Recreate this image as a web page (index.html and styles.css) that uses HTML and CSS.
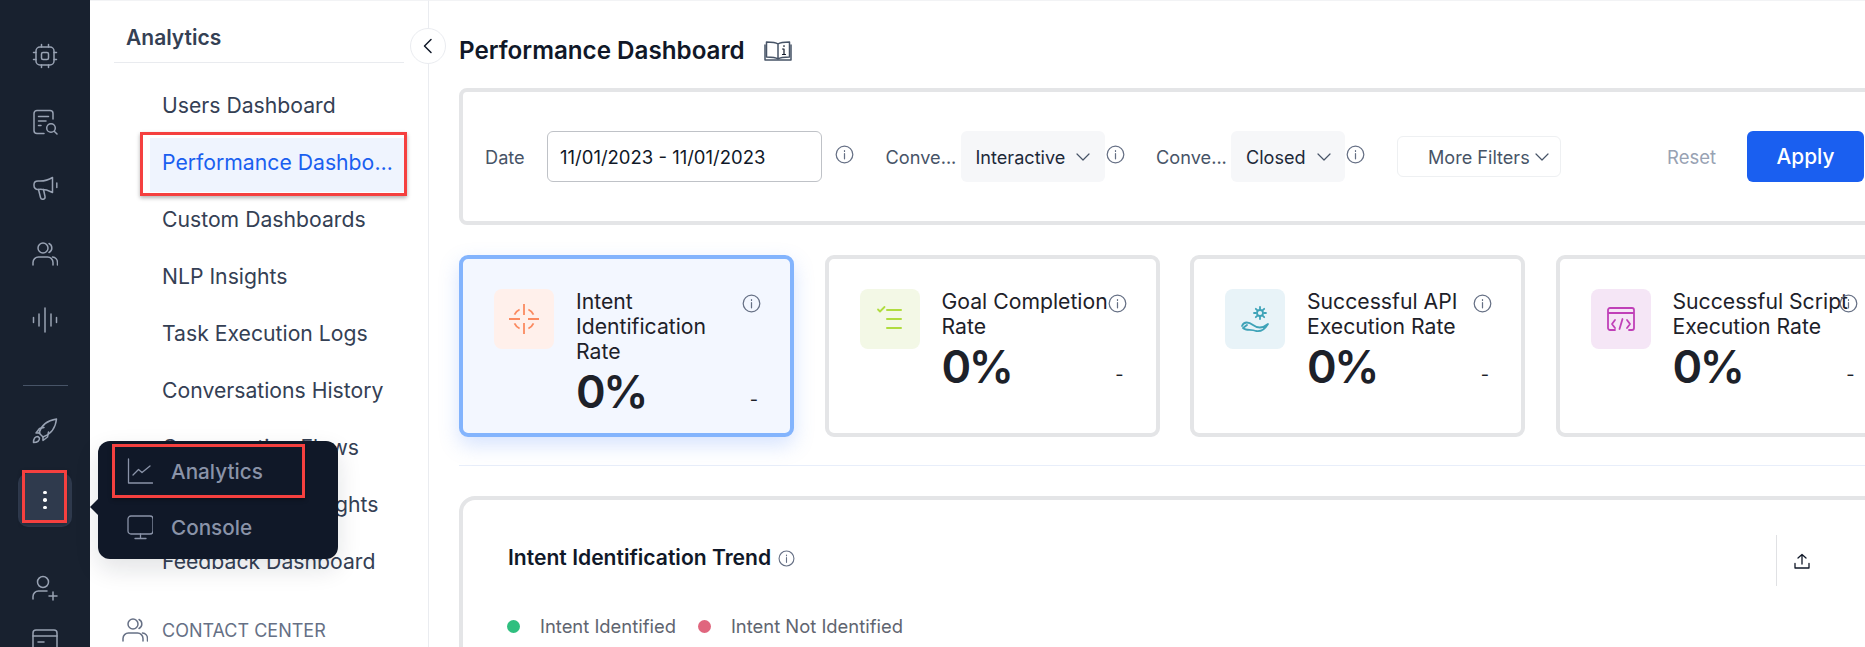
FILE: index.html
```html
<!DOCTYPE html>
<html lang="en">
<head>
<meta charset="utf-8">
<title>Performance Dashboard</title>
<link rel="stylesheet" href="styles.css">
</head>
<body>
<div class="app">
  <nav class="rail">
    <div class="rail-cell"><svg class="ri" viewBox="0 0 26 26"><rect x="4" y="4" width="18" height="18" rx="4"/><rect x="9.5" y="9.5" width="7" height="7" rx="1.5"/><path d="M9.5 4V1.5M16.500 4V1.500M9.500 24.500V22M16.500 24.500V22M4 9.500H1.500M4 16.500H1.500M24.500 9.500H22M24.500 16.500H22"/></svg></div>
    <div class="rail-cell"><svg class="ri" viewBox="0 0 26 26"><path d="M21 10V4.500A3 3 0 0 0 18 1.500H5A3 3 0 0 0 2 4.500V21.500A3 3 0 0 0 5 24.500H12"/><path d="M6.500 7.500H16.500M6.500 12H14M6.500 16.500H9"/><circle cx="19" cy="19" r="4.300"/><path d="M22.200 22.200L25 25"/></svg></div>
    <div class="rail-cell"><svg class="ri" viewBox="0 0 26 26"><path d="M20.500 2.500V17.500C15 14.500 11 14 6 14.500A3.800 3.800 0 0 1 2 10.500V9.500C2 7.500 3.500 6 6 6H8C12 6 16.500 5 20.500 2.500Z"/><path d="M6.500 14.500L8.500 22.500A2.300 2.300 0 0 0 13 21.500L11.500 14.500"/><path d="M24.800 8V12.500"/></svg></div>
    <div class="rail-cell"><svg class="ri" viewBox="0 0 26 26"><circle cx="11" cy="7" r="5"/><path d="M1 24V21.500A5.500 5.500 0 0 1 6.500 16H15.500A5.500 5.500 0 0 1 21 21.500V24"/><path d="M17 2.500A5 5 0 0 1 17 11.500M20.500 16A5.500 5.500 0 0 1 25.500 21.500V24"/></svg></div>
    <div class="rail-cell"><svg class="ri" viewBox="0 0 26 26"><path d="M1.500 10.500V15.500M7 7V19M13 1V25M19 7V19M24.500 10.500V15.500"/></svg></div>
    <div class="rail-line"></div>
    <div class="rail-cell rocket"><svg class="ri" viewBox="0 0 26 26"><path d="M9 17L7 15C9 8 15 2.500 24.500 1C23.500 10.500 18 16.500 11 19Z"/><path d="M8 15H4L7.500 10.500 12 9.500M11 18.500V22.500L15.500 19 16.500 14"/><path d="M6 18.500C3.500 18.500 1.500 20.500 1.500 24.500 5.500 24.500 7.500 22.500 7.500 20Z"/></svg></div>
    <div class="dots-btn"><i></i><i></i><i></i><span class="mark dots-mark"></span></div>
    <div class="rail-cell low first"><svg class="ri" viewBox="0 0 26 26"><circle cx="11" cy="7" r="5.500"/><path d="M1 24V21.500A5.500 5.500 0 0 1 6.500 16H15"/><path d="M21 17V25M17 21H25"/></svg></div>
    <div class="rail-cell low"><svg class="ri" viewBox="0 0 26 26"><rect x="1" y="1" width="24" height="24" rx="3"/><path d="M1 7H25M6 13H12"/></svg></div>
  </nav>

  <aside class="side">
    <div class="side-head">Analytics</div>
    <ul class="side-list">
      <li class="side-item">Users Dashboard</li>
      <li class="side-item active"><span class="side-text">Performance Dashboard</span><span class="mark item-mark"></span></li>
      <li class="side-item">Custom Dashboards</li>
      <li class="side-item">NLP Insights</li>
      <li class="side-item">Task Execution Logs</li>
      <li class="side-item">Conversations History</li>
      <li class="side-item">Conversation Flows</li>
      <li class="side-item">Conversation Insights</li>
      <li class="side-item">Feedback Dashboard</li>
    </ul>
    <div class="side-group">
      <svg class="gi" viewBox="0 0 26 26"><circle cx="11" cy="7" r="5"/><path d="M1 24V21.500A5.500 5.500 0 0 1 6.500 16H15.500A5.500 5.500 0 0 1 21 21.500V24"/><path d="M17 2.500A5 5 0 0 1 17 11.500M20.500 16A5.500 5.500 0 0 1 25.500 21.500V24"/></svg>
      <span>CONTACT CENTER</span>
    </div>
    <button class="collapse" type="button" aria-label="Collapse"><svg viewBox="0 0 12 16"><path d="M9 1.500L2.500 8L9 14.500"/></svg></button>
  </aside>

  <div class="popup">
    <div class="pop-row">
      <svg class="pi" viewBox="0 0 26 26"><path d="M1.500 1V25H25.500"/><path d="M6 17L11.500 11.500 15 14.500 23 8"/></svg>
      <span>Analytics</span><span class="mark pop-mark"></span>
    </div>
    <div class="pop-row">
      <svg class="pi" viewBox="0 0 26 26"><rect x="1" y="2" width="25" height="18" rx="3"/><path d="M13.500 20V24.500M8 24.500H19"/></svg>
      <span>Console</span>
    </div>
  </div>

  <main class="main">
    <div class="title-row">
      <h1 class="title">Performance Dashboard</h1>
      <svg class="book" viewBox="0 0 28 20"><path d="M14 3C12 1.500 9 1 2.500 1V16C9 16 12 16.500 14 18C16 16.500 19 16 25.500 16V1C19 1 16 1.500 14 3ZM14 3V18"/><path d="M1 4V19H27V4"/><path class="book-i" d="M20 4.500V5.500M18.500 8H20V13.500M18.500 13.500H21.500"/></svg>
    </div>

    <section class="filters">
      <span class="f-label date-label">Date</span>
      <div class="f-date">11/01/2023 - 11/01/2023</div>
      <svg class="info f-info" viewBox="0 0 20 20"><circle cx="10" cy="10" r="8.750"/><path d="M10 9V14.500M10 5.800V6.800"/></svg>
      <span class="f-label conv conv-a">Conve...</span>
      <div class="f-select sel-a">Interactive<svg class="chev" viewBox="0 0 14 8"><path d="M1 1L7 7L13 1"/></svg></div>
      <svg class="info s-info" viewBox="0 0 20 20"><circle cx="10" cy="10" r="8.750"/><path d="M10 9V14.500M10 5.800V6.800"/></svg>
      <span class="f-label conv conv-b">Conve...</span>
      <div class="f-select sel-b">Closed<svg class="chev" viewBox="0 0 14 8"><path d="M1 1L7 7L13 1"/></svg></div>
      <svg class="info s-info" viewBox="0 0 20 20"><circle cx="10" cy="10" r="8.750"/><path d="M10 9V14.500M10 5.800V6.800"/></svg>
      <div class="more">More Filters<svg class="chev" viewBox="0 0 14 8"><path d="M1 1L7 7L13 1"/></svg></div>
      <span class="reset">Reset</span>
      <button class="apply" type="button">Apply</button>
    </section>

    <section class="cards">
      <article class="card selected">
        <div class="c-icon orange"><svg viewBox="0 0 30 30"><path d="M10.600 5.500A10.500 10.500 0 0 0 5.500 10.600M19.400 5.500A10.500 10.500 0 0 1 24.500 10.600M10.600 24.500A10.500 10.500 0 0 1 5.500 19.400M19.400 24.500A10.500 10.500 0 0 0 24.500 19.400M15 0V11M15 19V30M0 15H11M19 15H30"/></svg></div>
        <div class="c-body">
          <div class="c-top"><div class="c-title">Intent Identification Rate</div><svg class="info c-info" viewBox="0 0 20 20"><circle cx="10" cy="10" r="8.750"/><path d="M10 9V14.500M10 5.800V6.800"/></svg></div>
          <div class="c-val"><span class="pct">0%</span><span class="dash">-</span></div>
        </div>
      </article>
      <article class="card">
        <div class="c-icon green"><svg viewBox="0 0 30 30"><path d="M3 5.500L5 7.500 9.500 3"/><path class="fat" d="M12 6H26M12 15H26M12 24H26"/></svg></div>
        <div class="c-body">
          <div class="c-top"><div class="c-title">Goal Completion Rate</div><svg class="info c-info" viewBox="0 0 20 20"><circle cx="10" cy="10" r="8.750"/><path d="M10 9V14.500M10 5.800V6.800"/></svg></div>
          <div class="c-val"><span class="pct">0%</span><span class="dash">-</span></div>
        </div>
      </article>
      <article class="card">
        <div class="c-icon teal"><svg viewBox="0 0 30 30"><circle cx="20" cy="9" r="3"/><path d="M20 3V5M20 13V15M14 9H16M24 9H26M15.800 4.800L17.200 6.200M22.800 11.800L24.200 13.200M15.800 13.200L17.200 11.800M22.800 6.200L24.200 4.800"/><path d="M2 22C4 17 9 18 13 21S22 25 28 20C25 25 21 28 16 27C11 25 6 27 3 24L7 21"/></svg></div>
        <div class="c-body">
          <div class="c-top"><div class="c-title">Successful API Execution Rate</div><svg class="info c-info" viewBox="0 0 20 20"><circle cx="10" cy="10" r="8.750"/><path d="M10 9V14.500M10 5.800V6.800"/></svg></div>
          <div class="c-val"><span class="pct">0%</span><span class="dash">-</span></div>
        </div>
      </article>
      <article class="card">
        <div class="c-icon purple"><svg viewBox="0 0 30 30"><path d="M9 26H4A2 2 0 0 1 2 24V6A2 2 0 0 1 4 4H26A2 2 0 0 1 28 6V24A2 2 0 0 1 26 26H23M2 9H28"/><path d="M9 16L6 20 9 24M21 16L24 20 21 24M16.500 15L13.500 25"/></svg></div>
        <div class="c-body">
          <div class="c-top"><div class="c-title">Successful Script Execution Rate</div><svg class="info c-info" viewBox="0 0 20 20"><circle cx="10" cy="10" r="8.750"/><path d="M10 9V14.500M10 5.800V6.800"/></svg></div>
          <div class="c-val"><span class="pct">0%</span><span class="dash">-</span></div>
        </div>
      </article>
    </section>

    <hr class="split">

    <section class="chart">
      <div class="chart-head">
        <div class="chart-name">
          <h2 class="chart-title">Intent Identification Trend</h2>
          <svg class="info t-info" viewBox="0 0 20 20"><circle cx="10" cy="10" r="8.750"/><path d="M10 9V14.500M10 5.800V6.800"/></svg>
        </div>
        <div class="export"><svg viewBox="0 0 16 16"><path d="M8 11V1.500M4 5L8 1.500 12 5"/><path d="M1 10.500V15H15V10.500"/></svg></div>
      </div>
      <div class="legend">
        <span class="dot g"></span><span class="leg-text">Intent Identified</span>
        <span class="dot r"></span><span class="leg-text">Intent Not Identified</span>
      </div>
    </section>
  </main>
</div>
</body>
</html>
```

FILE: styles.css
```css
* { box-sizing: border-box; }
html, body { margin: 0; height: 647px; overflow: hidden; background: #fff; }
body { font-family: Inter, "Liberation Sans", sans-serif; color: #101828; }
svg { display: block; fill: none; stroke-linecap: round; stroke-linejoin: round; }
h1, h2, ul { margin: 0; padding: 0; }

.app { display: flex; height: 647px; position: relative; overflow: hidden; }

/* icon rail */
.rail { width: 90px; flex-shrink: 0; background: #18212f; padding-top: 23px; display: flex; flex-direction: column; align-items: center; }
.rail-cell { height: 66px; width: 100%; display: flex; align-items: center; justify-content: center; flex-shrink: 0; }
.ri { width: 26px; height: 26px; stroke: #98a2b3; stroke-width: 1.5; }
.rail-line { width: 45px; height: 1px; background: #475467; margin-top: 32px; flex-shrink: 0; }
.rocket { margin-top: 12px; }
.dots-btn { position: relative; width: 54px; height: 54px; margin-top: 9px; border-radius: 10px; background: #2f3a4d; display: flex; flex-direction: column; align-items: center; justify-content: center; gap: 4px; flex-shrink: 0; }
.dots-btn i { width: 3.500px; height: 3.500px; border-radius: 50%; background: #fff; }
.low { height: 44px; }
.low.first { margin-top: 39px; }
.low + .low { margin-top: 10px; }

/* annotations */
.mark { position: absolute; border: 3px solid #f5403f; box-shadow: 0 2px 4px rgba(0, 0, 0, .3); pointer-events: none; }
.dots-mark { left: 4px; top: -3px; width: 45px; height: 53px; }
.item-mark { left: -10px; right: -2px; top: -6px; bottom: -4px; }
.pop-mark { left: 14px; top: 1px; width: 193px; height: 54px; }

/* sidebar */
.side { width: 339px; flex-shrink: 0; border-right: 1px solid #eaecf0; border-top: 1px solid #f2f3f5; position: relative; padding: 0 24px 0 24px; }
.side-head { height: 62px; border-bottom: 1px solid #e9ebef; padding: 22px 0 0 12px; font-size: 21px; line-height: 30px; font-weight: 600; color: #344054; white-space: nowrap; }
.side-list { list-style: none; padding: 18px 0 0 36px; }
.side-item { position: relative; height: 54px; margin-bottom: 3px; padding: 0 9px 6px 12px; display: flex; align-items: center; font-size: 21.200px; color: #344054; white-space: nowrap; width: 255px; }
.side-item.active { background: #eff4fe; color: #1a5ff0; }
.side-text { overflow: hidden; text-overflow: ellipsis; }
.side-group { display: flex; align-items: center; gap: 14px; padding-left: 8px; margin-top: 26px; font-size: 18px; color: #667085; white-space: nowrap; }
.gi { width: 26px; height: 26px; stroke: #667085; stroke-width: 1.500; }
.collapse { position: absolute; left: 320px; top: 27px; width: 36px; height: 36px; padding: 0; border: 1px solid #eaecf0; border-radius: 50%; background: #fff; display: flex; align-items: center; justify-content: center; z-index: 2; }
.collapse svg { width: 12px; height: 16px; stroke: #101828; stroke-width: 1.500; }

/* popup menu */
.popup { position: absolute; left: 98px; top: 441px; width: 240px; height: 118px; background: #101828; border-radius: 12px; padding-top: 2px; z-index: 5; box-shadow: 0 10px 24px rgba(16, 24, 40, .12); }
.popup::before { content: ""; position: absolute; left: -8px; top: 58px; border-right: 8px solid #101828; border-top: 8px solid transparent; border-bottom: 8px solid transparent; }
.pop-row { position: relative; height: 56px; display: flex; align-items: center; gap: 18px; padding-left: 29px; font-size: 20.700px; font-weight: 500; color: #8a93a8; }
.pi { width: 26px; height: 26px; stroke: #8a93a8; stroke-width: 1.300; }

/* main */
.main { flex: 1; min-width: 0; border-top: 1px solid #f2f3f5; padding: 35px 0 0 30px; overflow: hidden; }
.title-row { display: flex; align-items: center; gap: 19px; height: 30px; margin-bottom: 22px; }
.title { font-size: 24.200px; line-height: 30px; font-weight: 600; color: #101828; white-space: nowrap; }
.book { width: 28px; height: 20px; stroke: #475467; stroke-width: 1.500; }
.book-i { stroke: #101828; stroke-width: 1.200; }

.filters { width: 1480px; height: 137px; border: 4px solid #e4e5e7; border-radius: 8px; padding-left: 22px; display: flex; align-items: center; margin-bottom: 30px; }
.f-label { font-size: 18.200px; color: #475467; white-space: nowrap; }
.date-label { width: 62px; flex-shrink: 0; }
.f-date { width: 275px; height: 51px; flex-shrink: 0; border: 1px solid #bfc2c7; border-radius: 6px; padding-left: 12px; display: flex; align-items: center; font-size: 18.500px; color: #101828; white-space: nowrap; }
.info { width: 19px; height: 19px; stroke: #667085; stroke-width: 1.300; flex-shrink: 0; }
.f-info { margin: -4px 0 0 13px; }
.s-info { margin: -4px 0 0 1px; }
.conv { width: 75px; flex-shrink: 0; }
.conv-a { margin-left: 31.500px; }
.conv-b { margin-left: 31.500px; }
.f-select { height: 51px; flex-shrink: 0; background: #f6f7f9; border-radius: 6px; padding-left: 15px; display: flex; align-items: center; font-size: 18.100px; color: #1d2939; white-space: nowrap; }
.sel-a { width: 144px; gap: 11px; }
.sel-b { width: 114px; gap: 11px; }
.chev { width: 14px; height: 8px; stroke: #475467; stroke-width: 1.200; flex-shrink: 0; }
.more { width: 164px; height: 41px; margin-left: 32px; flex-shrink: 0; border: 1px solid #eef0f2; border-radius: 6px; padding-left: 30px; display: flex; align-items: center; gap: 5px; font-size: 18.100px; color: #475467; white-space: nowrap; }
.reset { margin-left: 106px; width: 80px; flex-shrink: 0; font-size: 18.500px; color: #98a2b3; }
.apply { width: 117px; height: 51px; flex-shrink: 0; border: 0; border-radius: 6px; background: #1a5ff0; color: #fff; font: 500 20.800px Inter, "Liberation Sans", sans-serif; }

.cards { display: flex; gap: 30.500px; width: 1500px; }
.card { width: 335px; height: 182px; flex-shrink: 0; border: 4px solid #e4e5e7; border-radius: 9px; padding: 30px 0 0 31px; display: flex; gap: 22px; background: #fff; }
.card.selected { background: #f3f7ff; border-color: #83b4fd; box-shadow: 0 8px 20px rgba(90, 145, 250, .25); }
.c-icon { width: 60px; height: 60px; flex-shrink: 0; border-radius: 8px; display: flex; align-items: center; justify-content: center; }
.c-icon svg { width: 30px; height: 30px; stroke-width: 1.800; }
.orange { background: #fff0eb; }
.orange svg { stroke: #fb8a60; stroke-linecap: butt; }
.green { background: #f3f8e6; }
.green svg { stroke: #b0dc3f; stroke-width: 1.800; }
.fat { stroke-width: 2; }
.teal { background: #e8f3f8; }
.teal svg { stroke: #3fa3b8; stroke-width: 1.800; }
.purple { background: #f5e6f6; }
.purple svg { stroke: #c040b8; stroke-width: 1.800; }
.c-body { width: 182px; flex-shrink: 0; }
.c-top { display: flex; align-items: flex-start; }
.c-title { width: 178px; flex-shrink: 0; font-size: 21.200px; line-height: 25px; color: #1d2129; }
.c-info { margin: 5px 0 0 -12px; position: relative; }
.c-val { display: flex; justify-content: space-between; align-items: center; }
.pct { font-size: 45px; line-height: 56px; font-weight: 600; letter-spacing: -2.500px; color: #1d2129; }
.dash { font-size: 18px; line-height: 24px; margin-top: 16px; color: #1d2129; }

.split { width: 1500px; height: 1px; border: 0; margin: 28px 0 30px; background: #e8eefa; }

.chart { width: 1500px; height: 300px; border: 4px solid #e4e5e7; border-radius: 16px 16px 0 0; padding: 35px 0 0 45px; }
.chart-head { width: 1318px; height: 51px; display: flex; align-items: center; justify-content: space-between; }
.chart-name { display: flex; align-items: center; gap: 7px; margin-top: -5px; }
.chart-title { font-size: 21.100px; line-height: 26px; font-weight: 600; color: #101828; white-space: nowrap; }
.t-info { width: 17px; height: 17px; }
.export { width: 50px; height: 51px; border-left: 1px solid #e0e1e4; padding-left: 17px; display: flex; align-items: center; }
.export svg { width: 16px; height: 16px; stroke: #101828; stroke-width: 1.300; }
.legend { display: flex; align-items: center; margin-top: 28px; height: 24px; font-size: 18.400px; color: #5f6570; }
.dot { width: 13px; height: 13px; border-radius: 50%; margin-right: 20px; flex-shrink: 0; }
.dot.g { margin-left: -1px; background: #2fbf7f; }
.dot.r { margin-left: 22px; background: #e0667e; }
.leg-text { white-space: nowrap; }
```
